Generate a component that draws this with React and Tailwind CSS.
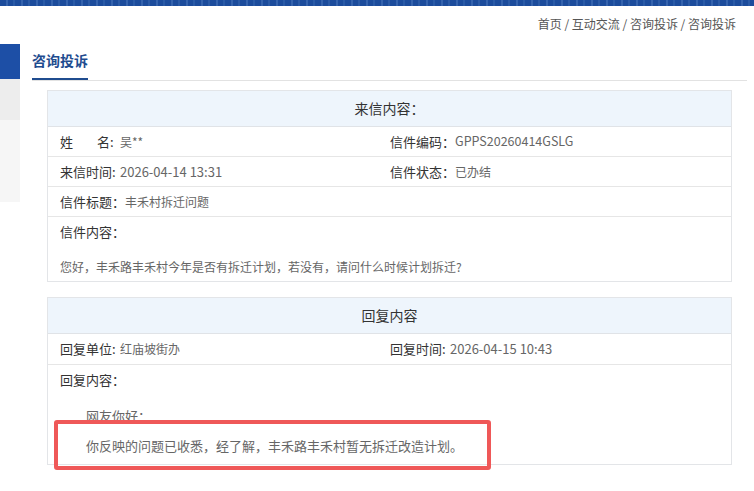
const fontStack = '"Microsoft YaHei", "Noto Sans CJK SC", "Noto Sans", sans-serif';

function Label({ children, narrow }) {
  return (
    <span className={`${narrow ? "inline-block w-[60px]" : ""} whitespace-nowrap text-[13px] text-[#333]`}>
      {children}
    </span>
  );
}

function Value({ children, size = "text-[12px]" }) {
  return <span className={`${size} text-[#666]`}>{children}</span>;
}

function Row({ children }) {
  return (
    <div className="flex h-[30px] items-center border-b border-[#e6e6e6] px-[12px]">
      {children}
    </div>
  );
}

function SplitRow({ left, right, tall }) {
  return (
    <div
      className={`grid ${tall ? "h-[31px]" : "h-[30px]"} grid-cols-[330px_1fr] items-center border-b border-[#e6e6e6]`}
    >
      <div className="flex items-center pl-[12px]">{left}</div>
      <div className="flex items-center pl-[12px]">{right}</div>
    </div>
  );
}

function Panel({ title, children }) {
  return (
    <div className="border border-[#e3e5e8] bg-white">
      <div className="flex h-[36px] items-center justify-center border-b border-[#e0e3e7] bg-[#eef5fc] text-[14px] text-[#333]">
        {title}
      </div>
      {children}
    </div>
  );
}

export default function App() {
  return (
    <div className="relative min-h-[491px] w-[754px] bg-white" style={{ fontFamily: fontStack }}>
      {/* patterned banner strip */}
      <div className="h-[6px] bg-[#1c4c9c] bg-[repeating-linear-gradient(90deg,#1c4c9c_0px,#1c4c9c_6px,#3563ad_6px,#3563ad_8px,#1c4c9c_8px,#1c4c9c_13px,#2a5aa6_13px,#2a5aa6_15px)]" />

      <div className="flex">
        {/* side nav stub */}
        <aside className="mt-[38px] w-[20px] shrink-0">
          <div className="h-[35px] bg-[#1d4fa6]" />
          <div className="h-[41px] bg-[#ededed]" />
          <div className="h-[82px] bg-[#f6f6f6]" />
        </aside>

        <main className="ml-[12px] w-[715px]">
          <div className="flex h-[36px] items-center justify-end pr-[11px] text-[12px] text-[#555]">
            首页 / 互动交流 / 咨询投诉 / 咨询投诉
          </div>

          <div className="flex border-b border-[#e2e2e2] pt-[8px]">
            <span className="border-b-2 border-[#1f4c8f] pb-[8px] text-[14px] font-bold leading-[20px] text-[#1f4c8f]">
              咨询投诉
            </span>
          </div>

          <div className="mx-[15px] mt-[9px]">
            <Panel title="来信内容：">
              <SplitRow
                left={
                  <>
                    <Label narrow>
                      姓<span className="inline-block w-[24px]" />名:
                    </Label>
                    <Value>吴**</Value>
                  </>
                }
                right={
                  <>
                    <Label>信件编码：</Label>
                    <Value size="text-[12.5px]">GPPS20260414GSLG</Value>
                  </>
                }
              />
              <SplitRow
                left={
                  <>
                    <Label narrow>来信时间:</Label>
                    <Value size="text-[13px]">2026-04-14 13:31</Value>
                  </>
                }
                right={
                  <>
                    <Label>信件状态：</Label>
                    <Value>已办结</Value>
                  </>
                }
              />
              <Row>
                <Label>信件标题：</Label>
                <Value>丰禾村拆迁问题</Value>
              </Row>
              <div className="px-[12px] pb-[4px] pt-[5px] text-[13px] leading-[20px]">
                <div className="text-[#333]">信件内容：</div>
                <p className="mt-[15px] text-[12px] text-[#666]">
                  您好，丰禾路丰禾村今年是否有拆迁计划，若没有，请问什么时候计划拆迁?
                </p>
              </div>
            </Panel>

            <div className="mt-[15px]">
              <Panel title="回复内容">
                <SplitRow
                  tall
                  left={
                    <>
                      <Label narrow>回复单位:</Label>
                      <Value>红庙坡街办</Value>
                    </>
                  }
                  right={
                    <>
                      <Label narrow>回复时间:</Label>
                      <Value size="text-[13px]">2026-04-15 10:43</Value>
                    </>
                  }
                />
                <div className="px-[12px] pb-[8px] pt-[5px] text-[13px] leading-[20px]">
                  <div className="text-[#333]">回复内容：</div>
                  <div className="mt-[16px] text-[#666]">
                    <p className="indent-[26px]">网友你好：</p>
                    <p className="mt-[10px] indent-[26px]">
                      你反映的问题已收悉，经了解，丰禾路丰禾村暂无拆迁改造计划。
                    </p>
                  </div>
                </div>
              </Panel>
            </div>
          </div>
        </main>
      </div>

      {/* highlight frame over the reply text */}
      <div className="pointer-events-none absolute left-[54px] top-[420px] h-[50px] w-[437px] rounded-[3px] border-[4px] border-[#ef5858]" />
    </div>
  );
}
